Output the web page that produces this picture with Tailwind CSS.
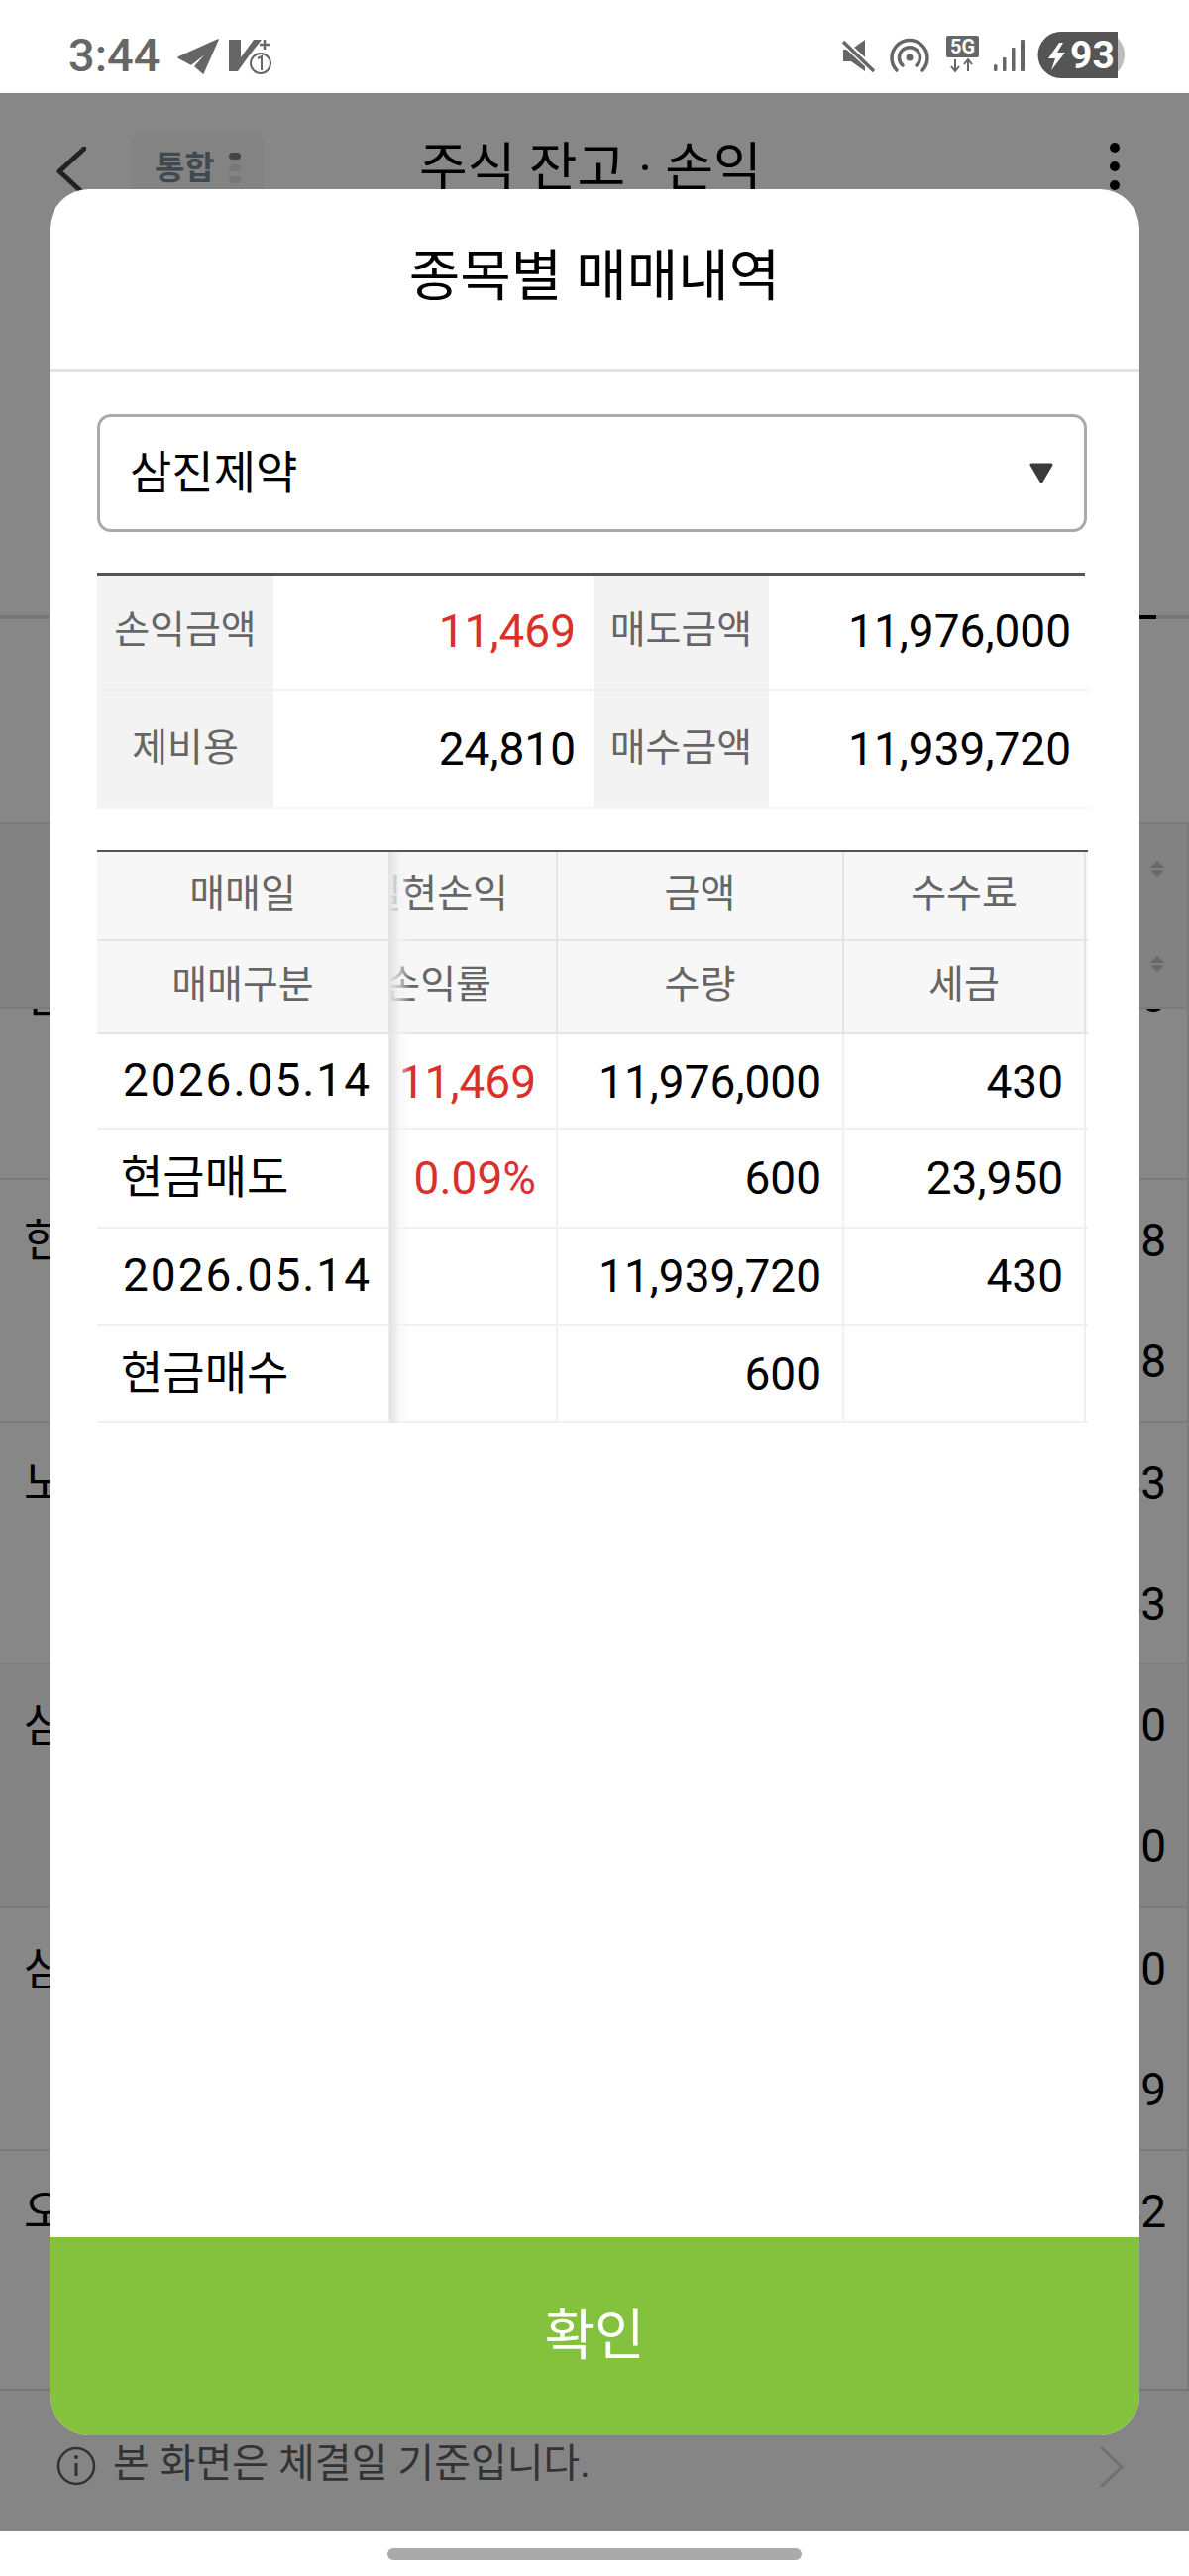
<!DOCTYPE html>
<html lang="ko">
<head>
<meta charset="utf-8">
<script src="https://cdn.jsdelivr.net/npm/@tailwindcss/browser@4"></script>
</head>
<body class="bg-white font-[family-name:Roboto,'Noto_Sans_CJK_KR',sans-serif]">
<div class="relative w-[1200px] h-[2600px] overflow-hidden bg-white">

  <!-- status bar -->
  <div class="relative h-[94px] text-[#666]">
    <svg class="absolute top-0 left-0" width="1200" height="94" viewBox="0 0 1200 94">
      <path d="M220 40 L180 58 L193 65 L212 50 L197 67 L205 74 Z" fill="#666" stroke="#666" stroke-width="1.5" stroke-linejoin="round"/>
      <path d="M231 40 H243 V58 L256 40 H264 L250 58 L240 72 H231 Z" fill="#666"/>
      <path d="M267 40 V50 M262 45 H272" stroke="#666" stroke-width="2.5"/>
      <circle cx="263" cy="64" r="10" fill="#fff" stroke="#666" stroke-width="2"/>
      <path d="M260 59 L264 57 V71" stroke="#666" stroke-width="2" fill="none"/>
      <path d="M851 50 H859 L873 40 V72 L859 62 H851 Z" fill="#666"/>
      <path d="M851 42 L883 72" stroke="#fff" stroke-width="7"/>
      <path d="M851 42 L882 72" stroke="#666" stroke-width="3.5"/>
      <circle cx="918" cy="58" r="3.5" fill="#666"/>
      <path d="M911 66 A10.5 10.5 0 1 1 925 66" stroke="#666" stroke-width="3.5" fill="none" stroke-linecap="round"/>
      <path d="M905 71 A18 18 0 1 1 931 71" stroke="#666" stroke-width="3.5" fill="none" stroke-linecap="round"/>
      <rect x="955" y="36" width="33" height="22" rx="2" fill="#666"/>
      <text x="971.5" y="54" text-anchor="middle" font-size="20" font-weight="700" fill="#fff" font-family="Roboto">5G</text>
      <path d="M964 60 V72 M960 67 L964 72 L968 67 M977 72 V60 M973 65 L977 60 L981 65" stroke="#666" stroke-width="2" fill="none"/>
      <rect x="1003" y="65" width="3.5" height="7" rx="1.5" fill="#666"/>
      <rect x="1012" y="58" width="3.5" height="14" rx="1" fill="#666"/>
      <rect x="1021" y="48" width="3.5" height="24" rx="1" fill="#666"/>
      <rect x="1030" y="40" width="4" height="32" rx="1" fill="#666"/>
      <rect x="1048" y="32" width="87" height="47" rx="23" fill="#bdbdbd"/>
      <path d="M1071 32 H1128 V79 H1071 A23 23 0 0 1 1071 32 Z" fill="#555"/>
      <path d="M1069 43 L1058 59 H1065 L1061 71 L1075 53 H1067 L1073 43 Z" fill="#fff"/>
    </svg>
    <span class="absolute left-[69px] top-[29px] text-[47px] leading-[54px] font-medium">3:44</span>
    <span class="absolute left-[1080px] top-[33px] text-[39px] leading-[46px] font-bold text-white">93</span>
  </div>

  <!-- dimmed page behind the dialog -->
  <div class="flex flex-col h-[2461px] bg-[#878787] text-black">
    <div class="relative h-[527px] shrink-0">
      <div class="flex items-start pt-[54px] pl-[57px] pr-[70px]">
        <svg class="shrink-0" width="30" height="50" viewBox="0 0 30 50"><path d="M28 2 L3 25 L28 48" stroke="#222" stroke-width="5" fill="none" stroke-linecap="round" stroke-linejoin="round"/></svg>
        <div class="ml-[46px] flex items-center gap-[14px] w-[133px] h-[68px] -mt-[16px] pl-[23px] rounded-[12px] bg-[#838383]">
          <span class="text-[33px] leading-[40px] mt-[8px] font-bold text-[#404850]">통합</span>
          <div class="flex flex-col gap-[5px] mt-[6px]">
            <span class="block w-[12px] h-[7px] rounded-full bg-[#3d454d]"></span>
            <span class="block w-[12px] h-[7px] rounded-full bg-[#777]"></span>
            <span class="block w-[12px] h-[7px] rounded-full bg-[#777]"></span>
          </div>
        </div>
        <span class="ml-[157px] -mt-[14px] text-[53px] leading-[72px] whitespace-nowrap">주식 잔고 · 손익</span>
        <div class="ml-auto flex flex-col gap-[9px] -mt-[4px]">
          <span class="block w-[10px] h-[10px] rounded-full bg-black"></span>
          <span class="block w-[10px] h-[10px] rounded-full bg-black"></span>
          <span class="block w-[10px] h-[10px] rounded-full bg-black"></span>
        </div>
      </div>
    </div>
    <div class="flex h-[4px] shrink-0 bg-[#777]">
      <div class="ml-[1100px] w-[67px] bg-black"></div>
    </div>
    <div class="h-[205px] shrink-0"></div>
    <div class="h-[186px] shrink-0 bg-[#828282] border-t-2 border-r-2 border-[#7a7a7a] flex flex-col items-end pr-[23px] pt-[37px] gap-[80px]">
      <svg width="14" height="16" viewBox="0 0 14 16"><path d="M7 0 L14 7 H0 Z M0 9 H14 L7 16 Z" fill="#696969"/></svg>
      <svg width="14" height="16" viewBox="0 0 14 16"><path d="M7 0 L14 7 H0 Z M0 9 H14 L7 16 Z" fill="#696969"/></svg>
    </div>
    <div class="h-[173px] shrink-0 overflow-hidden border-t-2 border-r-2 border-[#7a7a7a]">
      <div class="-mt-[74px] h-[122px] flex items-center justify-between pl-[24px] pr-[21px] text-[46px]"><span>신</span><span>0</span></div>
    </div>
    <div class="h-[245px] shrink-0 border-t-2 border-r-2 border-[#7a7a7a]">
      <div class="h-[122px] flex items-center justify-between pl-[24px] pr-[21px] text-[46px]"><span>한</span><span>78</span></div>
      <div class="h-[122px] flex items-center justify-end pr-[21px] text-[46px]"><span>78</span></div>
    </div>
    <div class="h-[244px] shrink-0 border-t-2 border-r-2 border-[#7a7a7a]">
      <div class="h-[122px] flex items-center justify-between pl-[24px] pr-[21px] text-[46px]"><span>노</span><span>43</span></div>
      <div class="h-[122px] flex items-center justify-end pr-[21px] text-[46px]"><span>43</span></div>
    </div>
    <div class="h-[246px] shrink-0 bg-[#838483] border-t-2 border-r-2 border-[#7a7a7a]">
      <div class="h-[122px] flex items-center justify-between pl-[24px] pr-[21px] text-[46px]"><span>삼</span><span>00</span></div>
      <div class="h-[122px] flex items-center justify-end pr-[21px] text-[46px]"><span>00</span></div>
    </div>
    <div class="h-[245px] shrink-0 border-t-2 border-r-2 border-[#7a7a7a]">
      <div class="h-[122px] flex items-center justify-between pl-[24px] pr-[21px] text-[46px]"><span>삼</span><span>00</span></div>
      <div class="h-[122px] flex items-center justify-end pr-[21px] text-[46px]"><span>89</span></div>
    </div>
    <div class="h-[242px] shrink-0 border-t-2 border-r-2 border-[#7a7a7a]">
      <div class="h-[122px] flex items-center justify-between pl-[24px] pr-[21px] text-[46px]"><span>오</span><span>42</span></div>
    </div>
    <div class="flex-1 border-t-2 border-[#777] bg-[#858585] flex items-start pl-[57px] pr-[65px] pt-[52px] text-[#333]">
      <svg class="shrink-0 mt-[4px]" width="40" height="40" viewBox="0 0 40 40"><circle cx="20" cy="20" r="18" stroke="#333" stroke-width="2.5" fill="none"/><circle cx="20" cy="11" r="2" fill="#333"/><path d="M20 17 V30" stroke="#333" stroke-width="3"/></svg>
      <span class="ml-[17px] text-[40px] leading-[44px] whitespace-nowrap">본 화면은 체결일 기준입니다.</span>
      <svg class="ml-auto mt-[3px]" width="26" height="44" viewBox="0 0 26 44"><path d="M2 2 L23 22 L2 42" stroke="#707070" stroke-width="3" fill="none"/></svg>
    </div>
  </div>

  <!-- home indicator -->
  <div class="flex justify-center pt-[17px]">
    <div class="w-[418px] h-[12px] rounded-full bg-[#aaa]"></div>
  </div>

  <!-- dialog -->
  <div class="absolute left-[50px] top-[191px] w-[1100px] h-[2267px] rounded-[40px] overflow-hidden bg-white flex flex-col">
    <div class="h-[184px] shrink-0 border-b-[3px] border-[#e3e3e3] flex items-center justify-center pb-[6px]">
      <span class="text-[56px] leading-[70px] text-black">종목별 매매내역</span>
    </div>
    <div class="flex-1 pl-[48px] pr-[52px] pt-[43px]">
      <div class="h-[119px] w-[999px] border-[3px] border-[#aaa] rounded-[14px] flex items-center justify-between pl-[30px] pr-[31px] pb-[2px]">
        <span class="text-[46px] leading-[60px] text-black">삼진제약</span>
        <svg width="24" height="21" viewBox="0 0 24 21" class="mt-[2px]"><path d="M2 2 H22 L12 19 Z" fill="#3a3a3a" stroke="#3a3a3a" stroke-width="3" stroke-linejoin="round"/></svg>
      </div>

      <div class="mt-[41px] w-[1000px]">
        <div class="w-[997px] h-[3px] bg-[#555]"></div>
        <div class="h-[116px] grid grid-cols-[178px_323px_177px_1fr] border-b-2 border-[#f0f0f0] text-[46px]">
          <div class="bg-[#f3f3f3] text-[39px] text-[#666] flex items-center justify-center pb-[4px]">손익금액</div>
          <div class="flex items-center justify-end pr-[18px] pb-[2px] text-[#d9302c]">11,469</div>
          <div class="bg-[#f3f3f3] text-[39px] text-[#666] flex items-center justify-center pb-[4px]">매도금액</div>
          <div class="flex items-center justify-end pr-[17px] pb-[2px] text-black">11,976,000</div>
        </div>
        <div class="h-[120px] grid grid-cols-[178px_323px_177px_1fr] border-b-2 border-[#f5f5f5] text-[46px]">
          <div class="bg-[#f3f3f3] text-[39px] text-[#666] flex items-center justify-center pb-[2px]">제비용</div>
          <div class="flex items-center justify-end pr-[18px] text-black">24,810</div>
          <div class="bg-[#f3f3f3] text-[39px] text-[#666] flex items-center justify-center pb-[2px]">매수금액</div>
          <div class="flex items-center justify-end pr-[17px] text-black">11,939,720</div>
        </div>
      </div>

      <div class="relative mt-[41px] w-[1000px] border-t-2 border-[#555] text-black">
        <div class="h-[90px] grid grid-cols-[296px_169px_289px_244px_2px] bg-[#f7f7f7] border-b-2 border-[#e4e4e4] text-[39px] text-[#666]">
          <div class="flex items-center justify-center pb-[4px] border-r-2 border-[#e4e4e4]">매매일</div>
          <div class="flex items-center justify-end pr-[48px] pb-[4px] border-r-2 border-[#e4e4e4] overflow-hidden whitespace-nowrap">실현손익</div>
          <div class="flex items-center justify-center pb-[4px] border-r-2 border-[#e4e4e4]">금액</div>
          <div class="flex items-center justify-center pb-[4px] border-r-2 border-[#e4e4e4]">수수료</div>
          <div></div>
        </div>
        <div class="h-[94px] grid grid-cols-[296px_169px_289px_244px_2px] bg-[#f7f7f7] border-b-2 border-[#e4e4e4] text-[39px] text-[#666]">
          <div class="flex items-center justify-center pb-[4px] border-r-2 border-[#e4e4e4]">매매구분</div>
          <div class="flex items-center justify-end pr-[65px] pb-[4px] border-r-2 border-[#e4e4e4] overflow-hidden whitespace-nowrap">손익률</div>
          <div class="flex items-center justify-center pb-[4px] border-r-2 border-[#e4e4e4]">수량</div>
          <div class="flex items-center justify-center pb-[4px] border-r-2 border-[#e4e4e4]">세금</div>
          <div></div>
        </div>

        <div class="h-[97px] grid grid-cols-[296px_169px_289px_244px_2px] border-b-2 border-[#f0f0f0] text-[46px]">
          <div class="flex items-center pl-[26px] pb-[2px] tracking-[2px] border-r-2 border-[#f0f0f0]">2026.05.14</div>
          <div class="flex items-center justify-end pr-[20px] pt-[2px] text-[#d9302c] border-r-2 border-[#f0f0f0]">11,469</div>
          <div class="flex items-center justify-end pr-[21px] pt-[2px] border-r-2 border-[#f0f0f0]">11,976,000</div>
          <div class="flex items-center justify-end pr-[21px] pt-[2px] border-r-2 border-[#f0f0f0]">430</div>
          <div></div>
        </div>
        <div class="h-[99px] grid grid-cols-[296px_169px_289px_244px_2px] border-b-2 border-[#f0f0f0] text-[46px]">
          <div class="flex items-center pl-[24px] pb-[2px] border-r-2 border-[#f0f0f0]">현금매도</div>
          <div class="flex items-center justify-end pr-[20px] text-[#d9302c] border-r-2 border-[#f0f0f0]">0.09%</div>
          <div class="flex items-center justify-end pr-[21px] border-r-2 border-[#f0f0f0]">600</div>
          <div class="flex items-center justify-end pr-[21px] border-r-2 border-[#f0f0f0]">23,950</div>
          <div></div>
        </div>
        <div class="h-[98px] grid grid-cols-[296px_169px_289px_244px_2px] border-b-2 border-[#f0f0f0] text-[46px]">
          <div class="flex items-center pl-[26px] pb-[2px] tracking-[2px] border-r-2 border-[#f0f0f0]">2026.05.14</div>
          <div class="border-r-2 border-[#f0f0f0]"></div>
          <div class="flex items-center justify-end pr-[21px] border-r-2 border-[#f0f0f0]">11,939,720</div>
          <div class="flex items-center justify-end pr-[21px] border-r-2 border-[#f0f0f0]">430</div>
          <div></div>
        </div>
        <div class="h-[98px] grid grid-cols-[296px_169px_289px_244px_2px] border-b-2 border-[#f0f0f0] text-[46px]">
          <div class="flex items-center pl-[24px] border-r-2 border-[#f0f0f0]">현금매수</div>
          <div class="border-r-2 border-[#f0f0f0]"></div>
          <div class="flex items-center justify-end pr-[21px] pt-[2px] border-r-2 border-[#f0f0f0]">600</div>
          <div class="border-r-2 border-[#f0f0f0]"></div>
          <div></div>
        </div>

        <div class="absolute left-[295px] top-0 bottom-0 w-[22px] bg-linear-to-r from-[#e2e2e2] via-[#f4f4f4]/60 to-transparent"></div>
      </div>
    </div>
    <div class="h-[200px] shrink-0 bg-[#84c23e] flex items-center justify-center pb-[2px]">
      <span class="text-[55px] leading-[70px] text-white">확인</span>
    </div>
  </div>
</div>
</body>
</html>
